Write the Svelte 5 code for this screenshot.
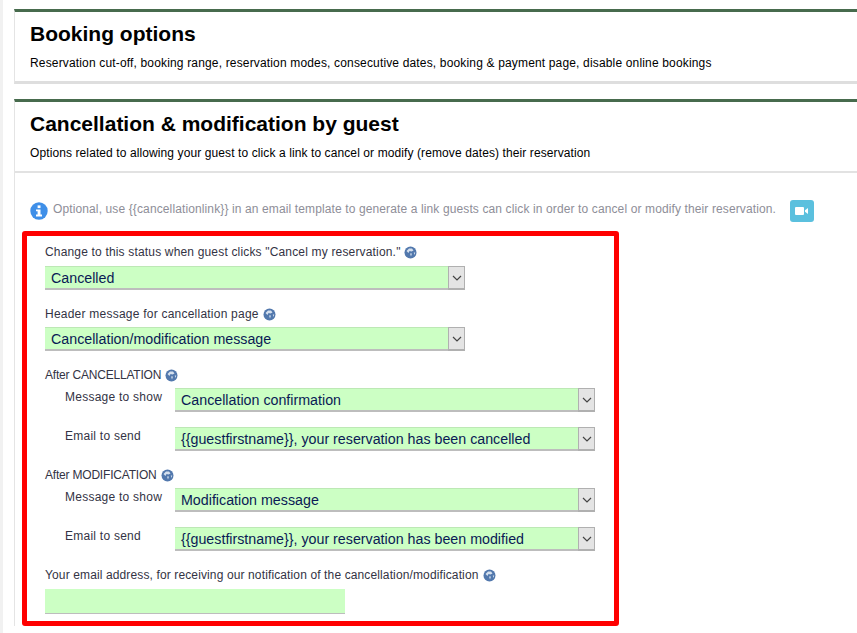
<script>
  const groups = [
    { label: 'After CANCELLATION', rows: [
      { label: 'Message to show', value: 'Cancellation confirmation' },
      { label: 'Email to send', value: '{{guestfirstname}}, your reservation has been cancelled' }
    ] },
    { label: 'After MODIFICATION', rows: [
      { label: 'Message to show', value: 'Modification message' },
      { label: 'Email to send', value: '{{guestfirstname}}, your reservation has been modified' }
    ] }
  ];
</script>

{#snippet help()}
  <svg class="help" width="13" height="13" viewBox="0 0 13 13" aria-hidden="true">
    <circle cx="6.5" cy="6.5" r="6" fill="#5278ad" />
    <path d="M2.5 5 L5 2.5 L8 2.5 L9.5 4.5 L7.5 5.5 L5.5 5 L4.5 7 Z M6 7.5 L8 7.5 L7 10.5 Z M9.8 6.5 L11.3 6.5 L10.3 9 Z" fill="#d5e0ee" />
  </svg>
{/snippet}

{#snippet select(value, cls)}
  <div class="select {cls}">
    <span class="value">{value}</span>
    <span class="arrow">
      <svg width="10" height="6" viewBox="0 0 10 6" aria-hidden="true"><path d="M1 1 L5 5 L9 1" fill="none" stroke="#444" stroke-width="1.2" /></svg>
    </span>
  </div>
{/snippet}

<div class="page">
  <section class="card first">
    <h2>Booking options</h2>
    <p class="sub s1">Reservation cut-off, booking range, reservation modes, consecutive dates, booking &amp; payment page, disable online bookings</p>
  </section>

  <section class="card second">
    <header class="head">
      <h2>Cancellation &amp; modification by guest</h2>
      <p class="sub s2">Options related to allowing your guest to click a link to cancel or modify (remove dates) their reservation</p>
    </header>

    <div class="info">
      <svg width="18" height="18" viewBox="0 0 18 18" aria-hidden="true">
        <circle cx="9" cy="9" r="8.7" fill="#3f8fe8" />
        <rect x="7.6" y="3.4" width="2.9" height="2.7" fill="#fff" />
        <path d="M6 7.4 H10.5 V12.6 H12 V14.4 H6 V12.6 H7.6 V9.2 H6 Z" fill="#fff" />
      </svg>
      <span class="note">Optional, use &#123;&#123;cancellationlink&#125;&#125; in an email template to generate a link guests can click in order to cancel or modify their reservation.</span>
      <span class="video">
        <svg width="14" height="8" viewBox="0 0 14 8" aria-hidden="true">
          <rect x="0" y="0" width="9" height="8" rx="1" fill="#fff" />
          <path d="M10 3.2 L13 1 V7 L10 4.8 Z" fill="#fff" />
        </svg>
      </span>
    </div>

    <div class="marked">
      <div class="field">
        <div class="label l1">Change to this status when guest clicks "Cancel my reservation." {@render help()}</div>
        {@render select('Cancelled', 'wide')}
      </div>
      <div class="field">
        <div class="label l2">Header message for cancellation page {@render help()}</div>
        {@render select('Cancellation/modification message', 'wide tight')}
      </div>

      {#each groups as g}
        <div class="group">
          <div class="label glabel">{g.label} {@render help()}</div>
          {#each g.rows as r}
            <div class="row">
              <span class="rlabel">{r.label}</span>
              {@render select(r.value, 'narrow')}
            </div>
          {/each}
        </div>
      {/each}

      <div class="field last">
        <div class="label email">Your email address, for receiving our notification of the cancellation/modification {@render help()}</div>
        <div class="input"></div>
      </div>
    </div>
  </section>
</div>

<style>
  :global(body) {
    margin: 0;
    background: #fff;
    overflow: hidden;
  }
  .page {
    box-sizing: border-box;
    height: 633px;
    overflow: hidden;
    border-left: 3px solid #f1f1f1;
    padding: 9px 0 0 11px;
    font-family: "Liberation Sans", Arial, sans-serif;
    color: #000;
  }
  .card {
    border-top: 3px solid #476b4d;
    border-left: 1px solid #e4e4e4;
    background: #fff;
  }
  .first {
    box-sizing: border-box;
    height: 75px;
    border-bottom: 3px solid #dedede;
    padding: 9px 0 0 15px;
  }
  .second {
    margin-top: 15px;
  }
  .head {
    box-sizing: border-box;
    height: 71px;
    padding: 9px 0 0 15px;
    border-bottom: 2px solid #e2e2e2;
  }
  h2 {
    margin: 0;
    font-size: 21px;
    line-height: 25px;
    font-weight: bold;
  }
  .sub {
    margin: 10px 0 0;
    font-size: 12px;
    line-height: 14px;
    white-space: nowrap;
  }
  .s1 {
    letter-spacing: 0.16px;
  }
  .s2 {
    letter-spacing: 0.1px;
  }
  .info {
    display: flex;
    align-items: center;
    height: 24px;
    margin-top: 26px;
    padding-left: 15px;
  }
  .note {
    margin-left: 5px;
    margin-top: -4px;
    font-size: 12px;
    letter-spacing: 0.12px;
    color: #8e8e98;
    white-space: nowrap;
  }
  .video {
    display: flex;
    align-items: center;
    justify-content: center;
    width: 24px;
    height: 22px;
    margin-left: 14px;
    border-radius: 3px;
    background: #5bc0de;
  }
  .marked {
    box-sizing: border-box;
    width: 597px;
    height: 395px;
    margin: 8px 0 0 7px;
    padding: 8px 0 0 18px;
    border: 5px solid #f00;
    border-radius: 3px;
  }
  .label {
    display: flex;
    align-items: center;
    gap: 3px;
    height: 16px;
    font-size: 12px;
    letter-spacing: 0.2px;
    color: #333344;
    white-space: nowrap;
  }
  .l1 {
    letter-spacing: 0.17px;
  }
  .l2 {
    letter-spacing: 0.23px;
    gap: 4px;
  }
  .glabel {
    letter-spacing: -0.2px;
    gap: 4px;
  }
  .email {
    letter-spacing: 0.125px;
    gap: 4px;
  }
  .field + .field {
    margin-top: 16px;
  }
  .field.last {
    margin-top: 16px;
  }
  .select {
    display: flex;
    box-sizing: border-box;
    height: 24px;
    margin-top: 6px;
    background: #ccffc4;
    border-top: 1px solid #bde8b5;
    border-bottom: 2px solid #bdbdbd;
  }
  .tight {
    margin-top: 5px;
  }
  .wide {
    width: 420px;
  }
  .narrow {
    width: 420px;
    margin-top: 0;
  }
  .value {
    flex: 1;
    padding-left: 6px;
    font-size: 14.25px;
    line-height: 22px;
    color: #0a1a55;
    white-space: nowrap;
  }
  .arrow {
    display: flex;
    align-items: center;
    justify-content: center;
    box-sizing: border-box;
    width: 17px;
    margin: -1px 0 -2px;
    background: #e4e4e4;
    border: 1px solid #b0b0b0;
    border-bottom-width: 2px;
  }
  .group {
    margin-top: 16px;
  }
  .row {
    display: flex;
    align-items: flex-start;
    margin-top: 15px;
    padding-left: 20px;
  }
  .glabel + .row {
    margin-top: 5px;
  }
  .rlabel {
    width: 110px;
    margin-top: 1px;
    font-size: 12px;
    line-height: 16px;
    letter-spacing: 0.25px;
    color: #333344;
    white-space: nowrap;
  }
  .input {
    box-sizing: border-box;
    width: 300px;
    height: 25px;
    margin-top: 6px;
    background: #ccffc4;
    border-bottom: 1px solid #bdbdbd;
  }
  .help {
    flex: none;
    margin-top: 1px;
  }
</style>
